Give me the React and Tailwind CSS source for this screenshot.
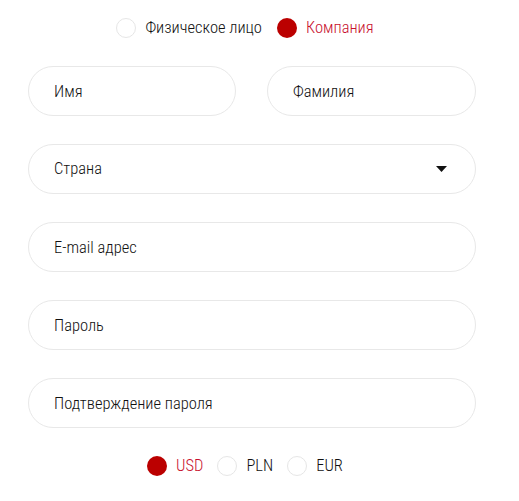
import React, { useState } from 'react';

const font = { fontFamily: '"Roboto Condensed", "Liberation Sans Narrow", "DejaVu Sans Condensed", sans-serif' };

const Radio = ({ checked, label, onClick }) => (
  <button type="button" onClick={onClick} className="flex items-center gap-[9px] h-[20px]">
    <span
      className={
        checked
          ? 'w-[20px] h-[20px] rounded-full bg-[#bb0000]'
          : 'w-[20px] h-[20px] rounded-full border border-[#e6e6e6] bg-white'
      }
    />
    <span className={checked ? 'text-[16.5px] leading-[20px] font-light text-[#c8102e]' : 'text-[16.5px] leading-[20px] font-light text-[#111]'}>
      {label}
    </span>
  </button>
);

const Field = ({ placeholder, className = '', type = 'text' }) => (
  <input
    type={type}
    placeholder={placeholder}
    className={`h-[50px] rounded-full border border-[#e8e8e8] bg-white pl-[25px] pr-4 text-[16.5px] font-light text-[#111] placeholder:text-[#111] outline-none ${className}`}
  />
);

export default function App() {
  const [kind, setKind] = useState('company');
  const [cur, setCur] = useState('USD');

  return (
    <div className="min-h-[501px] bg-white pt-[18px]" style={font}>
      <div className="w-[448px] ml-[28px] flex flex-col">
        {/* Person type */}
        <div className="flex justify-center gap-[15px] pr-[14px]">
          <Radio label="Физическое лицо" checked={kind === 'person'} onClick={() => setKind('person')} />
          <Radio label="Компания" checked={kind === 'company'} onClick={() => setKind('company')} />
        </div>

        <div className="mt-[28px] flex flex-col gap-[28px]">
          <div className="flex gap-[31px]">
            <Field placeholder="Имя" className="w-[208px]" />
            <Field placeholder="Фамилия" className="w-[209px]" />
          </div>

          <div className="h-[50px] rounded-full border border-[#e8e8e8] bg-white flex items-center pl-[25px] pr-[28px] justify-between text-[16.5px] font-light text-[#111]">
            <span>Страна</span>
            <svg width="11" height="6" viewBox="0 0 11 6">
              <path d="M0 0h11L5.5 6z" fill="#111" />
            </svg>
          </div>

          <Field placeholder="E-mail адрес" />
          <Field placeholder="Пароль" type="password" />
          <Field placeholder="Подтверждение пароля" type="password" />
        </div>

        {/* Currency */}
        <div className="mt-[28px] flex justify-center gap-[14px] pr-[14px]">
          {['USD', 'PLN', 'EUR'].map((c) => (
            <Radio key={c} label={c} checked={cur === c} onClick={() => setCur(c)} />
          ))}
        </div>
      </div>
    </div>
  );
}
